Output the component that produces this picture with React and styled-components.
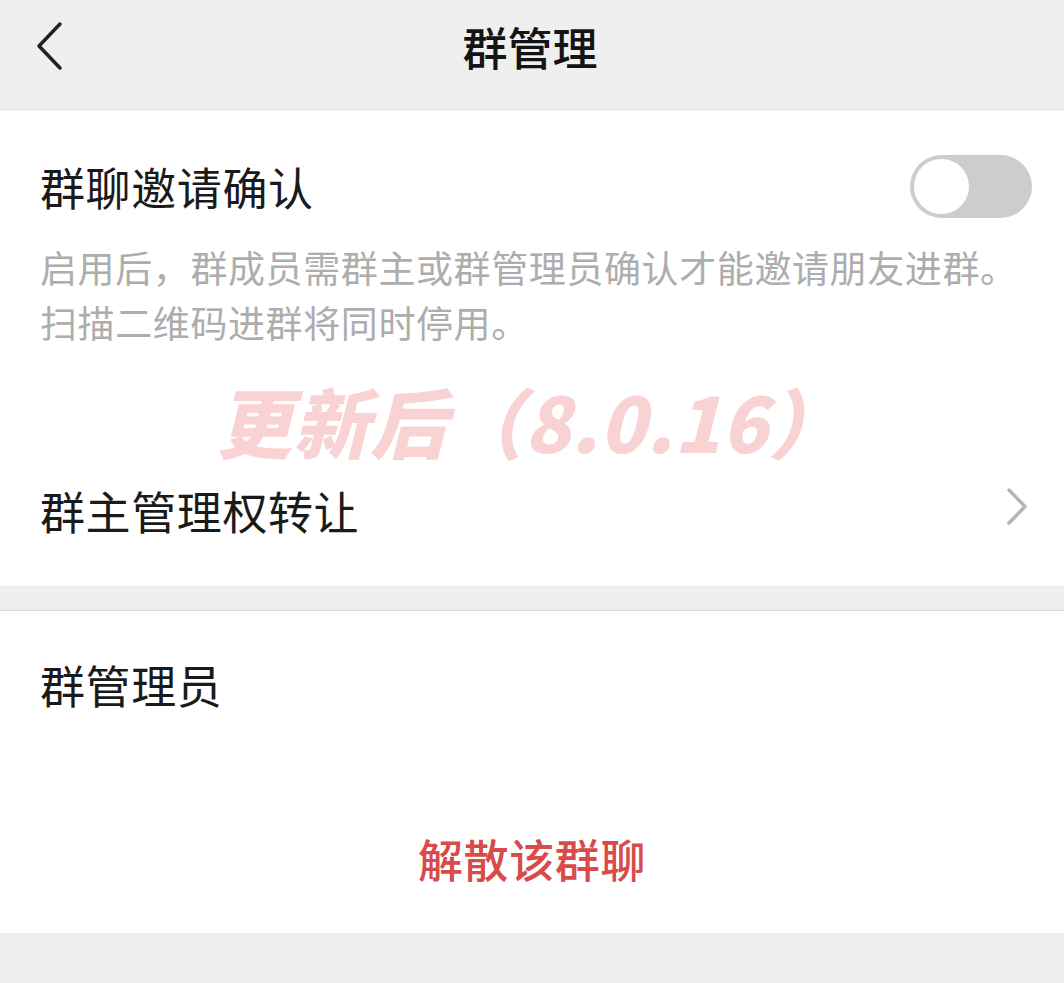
import React from 'react';
import styled, {createGlobalStyle} from 'styled-components';

const GlobalStyle = createGlobalStyle`
  html, body {
    margin: 0;
    padding: 0;
    background: #efefef;
  }
  body {
    font-family: 'Noto Sans CJK SC', 'Noto Sans', sans-serif;
  }
`;

const Page = styled.div`
  width: 1064px;
  min-height: 983px;
  background: #efefef;
  display: flex;
  flex-direction: column;
`;

const Header = styled.div`
  height: 109px;
  border-bottom: 1px solid #e3e3e3;
  display: flex;
  align-items: center;
  justify-content: center;
  position: relative;
`;

const BackButton = styled.div`
  position: absolute;
  left: 34px;
  top: 21px;
  width: 32px;
  height: 50px;
`;

const Title = styled.h1`
  margin: 0 4px 16px 0;
  font-size: 45px;
  font-weight: 500;
  color: #141414;
  line-height: 1;
`;

const Section = styled.div`
  background: #ffffff;
  padding: ${p => p.top}px 32px ${p => p.bottom}px 40px;
  display: flex;
  flex-direction: column;
  position: relative;
`;

const Row = styled.div`
  height: 76px;
  display: flex;
  align-items: center;
  justify-content: ${p => (p.center ? 'center' : 'space-between')};
  margin-top: ${p => p.gap || 0}px;
  padding-right: ${p => (p.center ? 8 : 0)}px;
`;

const Label = styled.span`
  font-size: 45px;
  letter-spacing: 0.6px;
  line-height: 1;
  color: ${p => (p.danger ? '#d94a4a' : '#1a1a1a')};
  font-weight: ${p => (p.danger ? 500 : 400)};
`;

const Description = styled.p`
  margin: 16px 0 0 0;
  font-size: 37px;
  letter-spacing: 0.6px;
  line-height: 55px;
  color: #adadad;
`;

const Switch = styled.div`
  width: 122px;
  height: 63px;
  border-radius: 32px;
  background: #cdcdcd;
  display: flex;
  align-items: center;
  padding: 0 4px;
  box-sizing: border-box;
`;

const Knob = styled.div`
  width: 55px;
  height: 55px;
  border-radius: 50%;
  background: #ffffff;
`;

const Watermark = styled.div`
  position: absolute;
  left: 216px;
  top: 272px;
  font-size: 76px;
  font-weight: 900;
  font-style: italic;
  color: #f9d3d3;
  line-height: 1;
  white-space: nowrap;
  letter-spacing: 1px;
`;

const Divider = styled.div`
  height: 23px;
  border-top: 1px solid #e6e6e6;
  border-bottom: 1px solid #dcdcdc;
  background: #efefef;
`;

const Chevron = ({dir, color, width}) => (
  <svg width="32" height="50" viewBox="0 0 32 50" fill="none">
    <path
      d={dir === 'left' ? 'M26 3 L5 25 L26 47' : 'M9 5 L25 21.5 L9 38'}
      stroke={color}
      strokeWidth={width}
      strokeLinecap="round"
      strokeLinejoin="round"
    />
  </svg>
);

export default function App() {
  return (
    <Page>
      <GlobalStyle />
      <Header>
        <BackButton>
          <Chevron dir="left" color="#222" width={3.5} />
        </BackButton>
        <Title>群管理</Title>
      </Header>

      <Section top={38} bottom={38}>
        <Row>
          <Label>群聊邀请确认</Label>
          <Switch><Knob /></Switch>
        </Row>
        <Description>
          启用后，群成员需群主或群管理员确认才能邀请朋友进群。<br />
          扫描二维码进群将同时停用。
        </Description>
        <Watermark>更新后（8.0.16）</Watermark>
        <Row gap={122}>
          <Label>群主管理权转让</Label>
          <Chevron dir="right" color="#b5b5b5" width={3.5} />
        </Row>
      </Section>

      <Divider />

      <Section top={35} bottom={37}>
        <Row>
          <Label>群管理员</Label>
        </Row>
        <Row gap={98} center>
          <Label danger>解散该群聊</Label>
        </Row>
      </Section>
    </Page>
  );
}
